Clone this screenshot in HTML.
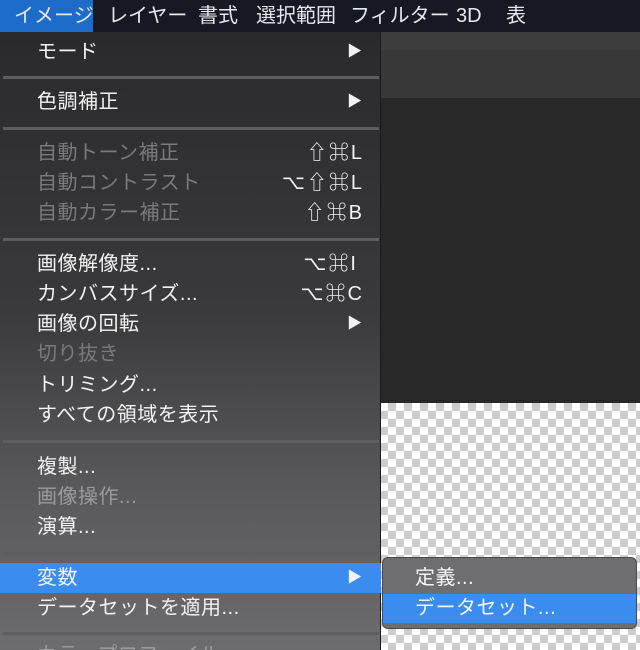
<!DOCTYPE html>
<html style="width:640px;height:650px;overflow:hidden"><head><meta charset="utf-8"><style>
*{margin:0;padding:0;box-sizing:border-box}
body{width:640px;height:650px;overflow:hidden;position:relative;background:#282828;font-family:"Liberation Sans","Noto Sans CJK JP",sans-serif;}
.bar{position:absolute;left:0;top:0;width:640px;height:32px;background:#161823;color:#e8e8ea;font-size:20px}
.bar span{position:absolute;top:0;height:32px;line-height:32px}
.ti{position:absolute;left:0;top:0;width:93px;height:32px;background:#1d6cc9}
.tb{position:absolute;left:380px;top:32px;width:260px;height:18px;background:#3d3d3d}
.tb2{position:absolute;left:380px;top:50px;width:260px;height:48px;background:#383838}
.chk{position:absolute;left:380px;top:403px;width:260px;height:247px;background-color:#fff;background-image:linear-gradient(45deg,#ccc 25%,transparent 25%,transparent 75%,#ccc 75%),linear-gradient(45deg,#ccc 25%,transparent 25%,transparent 75%,#ccc 75%);background-size:16px 16px;background-position:0 0,8px 8px}
.menu{position:absolute;left:0;top:32px;width:381px;height:618px;background:linear-gradient(#2a2a2c,#3a3a3c 45%,#5a5a5c 75%,#6c6c6e);border-right:1px solid #1a1a1a}
.it{position:absolute;left:37px;font-size:20px;color:#f2f2f2;height:30px;line-height:30px;white-space:nowrap;letter-spacing:0.5px}
.d{color:#7a7a7c}
.d2{color:#9a9a9c}
.sc{position:absolute;left:200px;width:164px;text-align:right;font-size:20px;height:30px;line-height:30px;color:#f2f2f2;letter-spacing:2px}
.ar{position:absolute;left:347px;font-size:15px;color:#f2f2f2;height:30px;line-height:30px}
.sep{position:absolute;left:3px;width:376px;height:3px;background:#5e5e60}
.hl{position:absolute;left:0;top:563px;width:381px;height:30px;background:#3a8cee}
.sub{position:absolute;left:382px;top:557px;width:255px;height:72px;background:#6e6e70;border-radius:6px;border:1px solid #4a4a4a;overflow:hidden}
.sub .h{position:absolute;left:0;top:36px;width:255px;height:29px;background:#3a8cee}
.sub div.t{position:absolute;left:32px;font-size:20px;color:#f4f4f4;height:30px;line-height:30px;letter-spacing:0.5px}
</style></head><body>
<div class="tb"></div><div class="tb2"></div><div class="chk"></div>
<div class="bar"><div class="ti"></div>
<span style="left:14px">イメージ</span><span style="left:108px">レイヤー</span><span style="left:198px">書式</span><span style="left:256px">選択範囲</span><span style="left:350px">フィルター</span><span style="left:456px">3D</span><span style="left:506px">表</span></div>
<div class="menu"></div>
<div class="hl"></div>
<div class="sep" style="top:76px"></div>
<div class="sep" style="top:127px"></div>
<div class="sep" style="top:238px"></div>
<div class="sep" style="top:440px"></div>
<div class="sep" style="top:552px"></div>
<div class="sep" style="top:632px"></div>
<div class="it" style="top:37px">モード</div><div class="ar" style="top:37px">▶</div>
<div class="it" style="top:87px">色調補正</div><div class="ar" style="top:87px">▶</div>
<div class="it d" style="top:138px">自動トーン補正</div><div class="sc d" style="top:138px">⇧⌘L</div>
<div class="it d" style="top:168px">自動コントラスト</div><div class="sc d" style="top:168px">⌥⇧⌘L</div>
<div class="it d" style="top:198px">自動カラー補正</div><div class="sc d" style="top:198px">⇧⌘B</div>
<div class="it" style="top:249px">画像解像度...</div><div class="sc" style="top:249px;width:158px">⌥⌘I</div>
<div class="it" style="top:279px">カンバスサイズ...</div><div class="sc" style="top:279px">⌥⌘C</div>
<div class="it" style="top:309px">画像の回転</div><div class="ar" style="top:309px">▶</div>
<div class="it d" style="top:339px">切り抜き</div>
<div class="it" style="top:370px">トリミング...</div>
<div class="it" style="top:400px">すべての領域を表示</div>
<div class="it" style="top:452px">複製...</div>
<div class="it d2" style="top:482px">画像操作...</div>
<div class="it" style="top:512px">演算...</div>
<div class="it" style="top:563px">変数</div><div class="ar" style="top:563px">▶</div>
<div class="it" style="top:593px">データセットを適用...</div>
<div class="it d2" style="top:640px">カラープロファイル</div>
<div class="sub"><div class="h"></div><div class="t" style="top:5px">定義...</div><div class="t" style="top:35px">データセット...</div></div>
</body></html>
